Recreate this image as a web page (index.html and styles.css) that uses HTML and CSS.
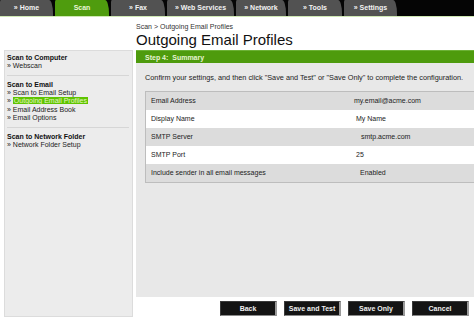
FILE: index.html
```html
<!DOCTYPE html>
<html>
<head>
<meta charset="utf-8">
<link rel="stylesheet" href="styles.css">
</head>
<body>
<nav class="tabs">
  <div class="tab t-home">» Home</div>
  <div class="tab t-scan active">Scan</div>
  <div class="tab t-fax">» Fax</div>
  <div class="tab t-web">» Web Services</div>
  <div class="tab t-net">» Network</div>
  <div class="tab t-tools">» Tools</div>
  <div class="tab t-set">» Settings</div>
</nav>
<div class="rule"></div>
<header class="header">
  <div class="crumb">Scan &gt; Outgoing Email Profiles</div>
  <h1 class="title">Outgoing Email Profiles</h1>
</header>
<div class="body">
  <aside class="side">
    <div class="sec sec1">
      <div class="sh">Scan to Computer</div>
      <div class="si">» Webscan</div>
    </div>
    <div class="sec sec2">
      <div class="sh">Scan to Email</div>
      <div class="si">» Scan to Email Setup</div>
      <div class="si">» <span class="hl">Outgoing Email Profiles</span></div>
      <div class="si">» Email Address Book</div>
      <div class="si">» Email Options</div>
    </div>
    <div class="sec sec3">
      <div class="sh">Scan to Network Folder</div>
      <div class="si">» Network Folder Setup</div>
    </div>
  </aside>
  <main class="main">
    <div class="step">Step 4:&nbsp; Summary</div>
    <div class="panel">
      <p class="confirm">Confirm your settings, and then click "Save and Test" or "Save Only" to complete the configuration.</p>
      <div class="table">
        <div class="row gray"><span class="k">Email Address</span><span class="v">my.email@acme.com</span></div>
        <div class="row"><span class="k">Display Name</span><span class="v v2">My Name</span></div>
        <div class="row gray"><span class="k">SMTP Server</span><span class="v v3">smtp.acme.com</span></div>
        <div class="row"><span class="k">SMTP Port</span><span class="v v2">25</span></div>
        <div class="row gray"><span class="k">Include sender in all email messages</span><span class="v v4">Enabled</span></div>
      </div>
    </div>
    <div class="buttons">
      <button class="btn">Back</button>
      <button class="btn">Save and Test</button>
      <button class="btn">Save Only</button>
      <button class="btn">Cancel</button>
    </div>
  </main>
</div>
</body>
</html>
```
FILE: styles.css
```css
html, body {
  margin: 0;
  padding: 0;
  background: #ffffff;
  overflow: hidden;
}
body {
  width: 474px;
  height: 319px;
  font-family: "Liberation Sans", Arial, sans-serif;
  font-size: 7px;
  color: #222;
}
.tabs {
  display: flex;
  height: 16px;
  background: #050505;
  gap: 1px;
}
.tab {
  height: 16px;
  line-height: 16px;
  background: #525252;
  color: #f2f2f2;
  font-weight: bold;
  font-size: 7px;
  text-align: center;
  border-top-right-radius: 4px 14px;
  border-top-left-radius: 1px 2px;
}
.tab.active {
  background: #4f9c0e;
  color: #e9f6d6;
}
.t-home { width: 53px; }
.t-scan { width: 54px; margin-left: 1px; }
.t-fax { width: 54px; margin-left: 1px; }
.t-web { width: 67px; margin-left: 1px; }
.t-net { width: 50px; margin-left: 1px; }
.t-tools { width: 54px; margin-left: 1px; }
.t-set { width: 53px; margin-left: 1px; }
.rule {
  height: 1px;
  background: #cfe8b4;
}
.header {
  margin-left: 136px;
  padding-top: 6px;
  padding-bottom: 2px;
}
.crumb {
  line-height: 8px;
  font-size: 7px;
  color: #333;
}
.title {
  margin: 0;
  font-size: 15px;
  line-height: 17px;
  font-weight: normal;
  color: #111;
}
.body {
  display: flex;
  align-items: flex-start;
}
.side {
  margin-left: 4px;
  width: 129px;
  height: 267px;
  background: #ececec;
  border: 1px solid #dcdcdc;
  padding: 0 3px 0 2px;
  box-sizing: border-box;
  line-height: 8.5px;
}
.sec1 { padding-top: 1.5px; padding-bottom: 5px; border-bottom: 1px solid #d6d6d6; }
.sec2 { padding-top: 3.5px; padding-bottom: 4.5px; border-bottom: 1px solid #d6d6d6; }
.sec3 { padding-top: 4px; }
.sh {
  font-weight: bold;
  line-height: 9px;
  color: #111;
}
.si {
  color: #222;
}
.hl {
  background: #5ec400;
  color: #e4f6c6;
  padding: 0 1px;
}
.main {
  margin-left: 3px;
  flex: 1;
}
.step {
  height: 13px;
  line-height: 13px;
  background: #4e9b0d;
  border-top: 1px solid #6cb236;
  box-sizing: border-box;
  padding-left: 9px;
  color: #e6f4d2;
  font-weight: bold;
}
.panel {
  height: 234px;
  background: #e8e8e8;
  padding: 10px 0 0 9px;
  box-sizing: border-box;
}
.confirm {
  margin: 0 0 9px;
  line-height: 9px;
  font-size: 7.3px;
  color: #222;
  white-space: nowrap;
}
.table {
  border: 1px solid #bdbdbd;
  border-right: none;
}
.row {
  display: flex;
  height: 18px;
  line-height: 18px;
  background: #ffffff;
}
.row.gray {
  background: #dcdcdc;
}
.k {
  width: 203px;
  padding-left: 5px;
  color: #222;
}
.v { color: #222; }
.v2 { padding-left: 2px; }
.v3 { padding-left: 7px; }
.v4 { padding-left: 6px; }
.buttons {
  display: flex;
  justify-content: flex-end;
  gap: 7px;
  padding-right: 5px;
  margin-top: 4px;
}
.btn {
  width: 57px;
  height: 15px;
  padding: 0;
  background: #141414;
  color: #f0f0f0;
  font-family: "Liberation Sans", Arial, sans-serif;
  font-size: 7px;
  font-weight: bold;
  border: 1px solid #3a3a3a;
  border-right: 2px solid #9a9a9a;
  border-bottom: 1px solid #8a8a8a;
  box-sizing: border-box;
}
```
